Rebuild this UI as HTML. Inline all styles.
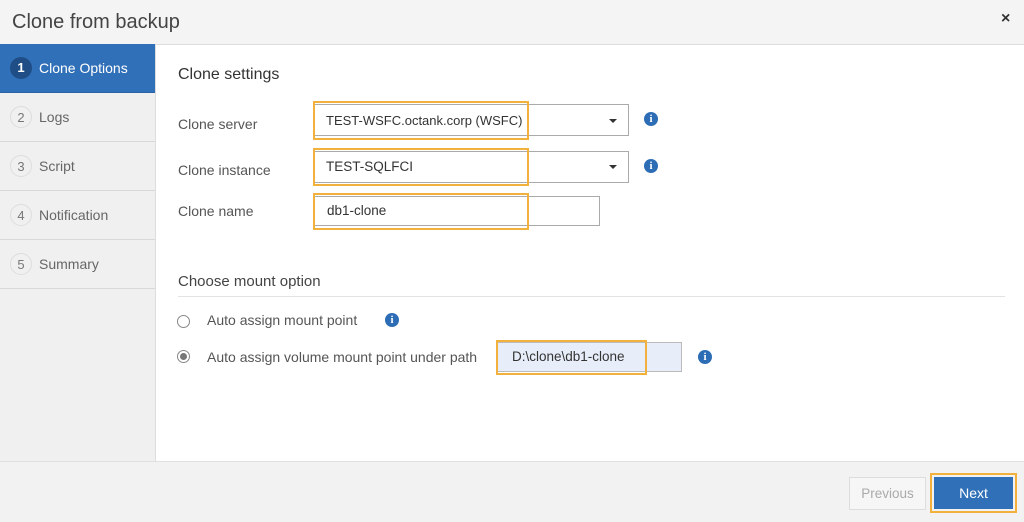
<!DOCTYPE html><html><head><style>
body{margin:0;width:1024px;height:522px;overflow:hidden;background:#f2f2f2;font-family:"Liberation Sans",sans-serif;color:#444;position:relative}
.a{position:absolute}
.hdr{left:0;top:0;width:1024px;height:44px;background:#f4f4f4;border-bottom:1px solid #ddd}
.side{left:0;top:44px;width:155px;height:417px;background:#f0f0f0;border-right:1px solid #ddd}
.item{position:absolute;left:0;width:155px;height:48px;border-bottom:1px solid #d8d8d8;font-size:14px;color:#666}
.item .c{position:absolute;left:10px;top:13px;width:22px;height:22px;border:1px solid #ddd;border-radius:50%;text-align:center;line-height:22px;font-size:13px;color:#777;box-sizing:border-box}
.item span{position:absolute;left:39px;top:16px}
.main{left:156px;top:45px;width:868px;height:416px;background:#fff}
.lbl{font-size:14px;color:#555}
.box{border:1px solid #aaa;background:#fff;box-sizing:border-box}
.hl{border:2px solid #f2b03c;box-sizing:border-box}
.info{width:14px;height:14px;border-radius:50%;background:#2d6db5;color:#fff;font-size:11px;font-weight:bold;text-align:center;line-height:14px;font-family:"Liberation Serif",serif}
.caret{width:0;height:0;border-left:4px solid transparent;border-right:4px solid transparent;border-top:4px solid #333}
.txt{font-size:13.5px;color:#333}
</style></head><body>
<div class="a hdr"></div>
<div class="a" style="left:12px;top:11px;font-size:20px;color:#444">Clone from backup</div>
<div class="a" style="left:1001px;top:10px;font-size:16px;font-weight:bold;color:#333">×</div>
<div class="a side">
<div class="item" style="top:0;background:#3070b8;color:#fff;border-bottom:1px solid #2a64a6"><div class="c" style="background:#1f4e86;border:none;color:#fff;font-weight:bold">1</div><span>Clone Options</span></div>
<div class="item" style="top:49px"><div class="c">2</div><span>Logs</span></div>
<div class="item" style="top:98px"><div class="c">3</div><span>Script</span></div>
<div class="item" style="top:147px"><div class="c">4</div><span>Notification</span></div>
<div class="item" style="top:196px"><div class="c">5</div><span>Summary</span></div>
</div>
<div class="a main"></div>
<div class="a" style="left:178px;top:66px;font-size:16px;color:#333">Clone settings</div>
<div class="a lbl" style="left:178px;top:116px">Clone server</div>
<div class="a lbl" style="left:178px;top:162px">Clone instance</div>
<div class="a lbl" style="left:178px;top:203px">Clone name</div>
<div class="a box" style="left:314px;top:104px;width:315px;height:32px"></div>
<div class="a caret" style="left:609px;top:119px"></div>
<div class="a box" style="left:314px;top:151px;width:315px;height:32px"></div>
<div class="a caret" style="left:609px;top:165px"></div>
<div class="a box" style="left:314px;top:196px;width:286px;height:30px"></div>
<div class="a hl" style="left:313px;top:101px;width:216px;height:39px"></div>
<div class="a hl" style="left:313px;top:148px;width:216px;height:38px"></div>
<div class="a hl" style="left:313px;top:193px;width:216px;height:37px"></div>
<div class="a txt" style="left:326px;top:113px;font-size:13px">TEST-WSFC.octank.corp (WSFC)</div>
<div class="a txt" style="left:326px;top:159px">TEST-SQLFCI</div>
<div class="a txt" style="left:327px;top:203px">db1-clone</div>
<div class="a info" style="left:644px;top:112px">i</div>
<div class="a info" style="left:644px;top:159px">i</div>
<div class="a" style="left:178px;top:273px;font-size:15px;color:#444">Choose mount option</div>
<div class="a" style="left:178px;top:296px;width:827px;border-top:1px solid #e2e2e2"></div>
<div class="a" style="left:177px;top:315px;width:13px;height:13px;border:1px solid #888;border-radius:50%;box-sizing:border-box"></div>
<div class="a lbl" style="left:207px;top:312px">Auto assign mount point</div>
<div class="a info" style="left:385px;top:313px">i</div>
<div class="a" style="left:177px;top:350px;width:13px;height:13px;border:1px solid #888;border-radius:50%;box-sizing:border-box"><div style="margin:2px;width:7px;height:7px;border-radius:50%;background:#777"></div></div>
<div class="a lbl" style="left:207px;top:349px">Auto assign volume mount point under path</div>
<div class="a" style="left:497px;top:342px;width:185px;height:30px;background:#e8eef9;border:1px solid #bbb;box-sizing:border-box"></div>
<div class="a hl" style="left:496px;top:340px;width:151px;height:35px"></div>
<div class="a txt" style="left:512px;top:349px">D:\clone\db1-clone</div>
<div class="a info" style="left:698px;top:350px">i</div>
<div class="a" style="left:0;top:461px;width:1024px;border-top:1px solid #e0e0e0"></div>
<div class="a" style="left:849px;top:477px;width:77px;height:33px;border:1px solid #ddd;background:#f6f6f6;box-sizing:border-box;color:#aaa;font-size:13.5px;text-align:center;line-height:31px">Previous</div>
<div class="a" style="left:930px;top:473px;width:87px;height:40px;border:2px solid #f2b03c;box-sizing:border-box;padding:2px"><div style="background:#3070b8;color:#fff;height:100%;font-size:14px;text-align:center;line-height:32px">Next</div></div>
</body></html>
